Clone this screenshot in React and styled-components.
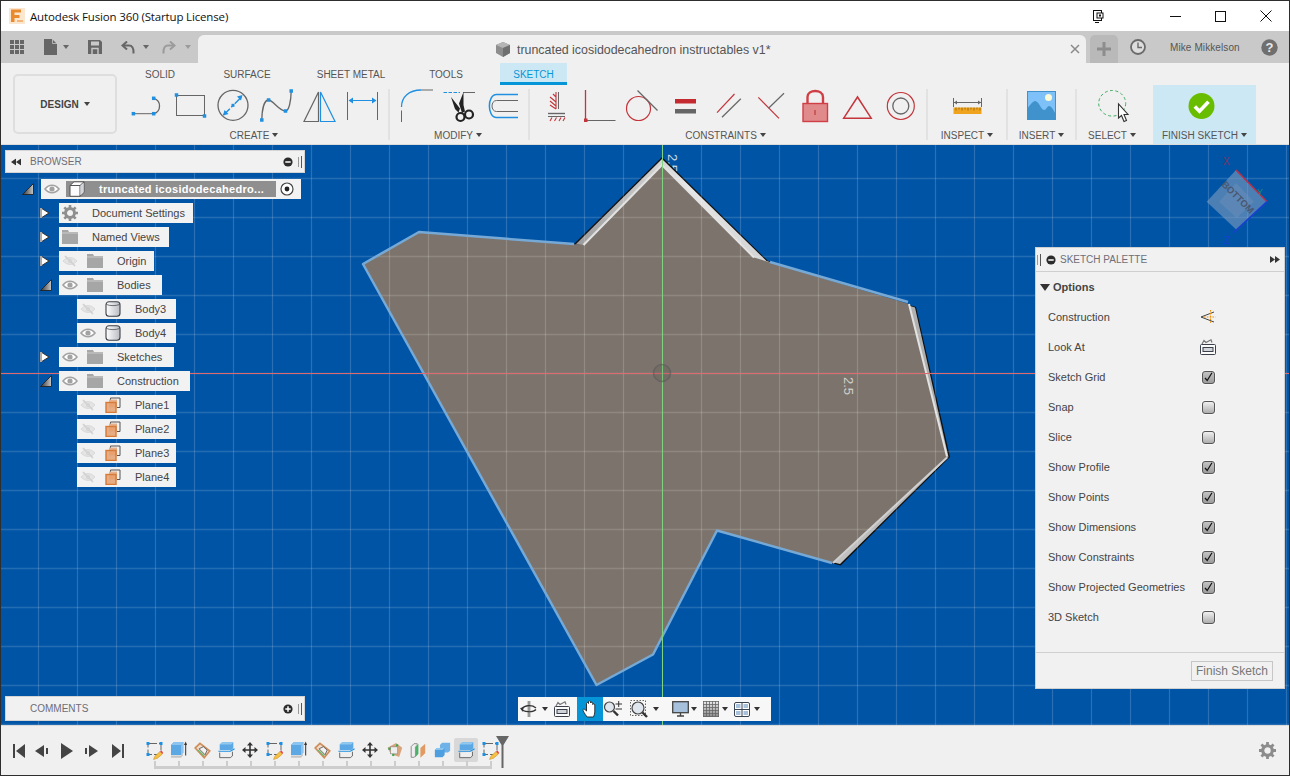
import React from "react";
import styled, { createGlobalStyle } from "styled-components";

const Global = createGlobalStyle`
  html, body { margin: 0; padding: 0; background: #f0f0f0; }
  body { font-family: "Liberation Sans", Arial, sans-serif; overflow: hidden; }
  svg { display: block; flex: none; }
`;

const Window = styled.div`
  width: 1290px; height: 776px; box-sizing: border-box;
  border: 1px solid #2e2e2e; display: flex; flex-direction: column; overflow: hidden;
`;

/* ---------- title bar ---------- */
const TitleBar = styled.header`
  height: 30px; background: #fff; display: flex; align-items: center; padding-left: 8px;
`;
const AppTitle = styled.span`
  margin-left: 5px; font: 11.5px "Open Sans", sans-serif; color: #111; letter-spacing: -0.15px;
`;
const WinControls = styled.div`
  margin-left: auto; display: flex; align-items: center; height: 100%;
`;
const WinBtn = styled.div`
  width: ${p => p.$w}px; margin-left: ${p => p.$ml || 0}px; display: flex; justify-content: center; align-items: center;
`;

/* ---------- tab strip ---------- */
const TabStrip = styled.div`
  height: 32px; background: #c9c9c9; display: flex; align-items: flex-end;
`;
const QuickBar = styled.div`
  width: 197px; height: 100%; display: flex; align-items: center;
`;
const Slot = styled.div`
  width: ${p => p.$w}px; margin-left: ${p => p.$ml || 0}px; flex: none;
  display: flex; justify-content: center; align-items: center;
`;
const DocTab = styled.div`
  width: 888px; height: 28px; background: #f0f0f0; border-radius: 6px 6px 0 0; position: relative;
  display: flex; align-items: center; padding-left: 298px; box-sizing: border-box;
`;
const DocTitle = styled.span`
  margin-left: 7px; margin-top: 2px; font-size: 12.4px; color: #555; white-space: nowrap;
`;
const DocClose = styled.div`
  position: absolute; left: 872px; top: 9px;
`;
const NewTab = styled.div`
  margin-left: 4px; width: 28px; height: 28px; background: #b9b9b9; border-radius: 5px 5px 0 0;
  display: flex; align-items: center; justify-content: center;
`;
const UserArea = styled.div`
  flex: 1; height: 100%; display: flex; align-items: center;
`;
const UserName = styled.span`
  margin-left: 24px; font-size: 10px; color: #555; width: 68px; white-space: nowrap; letter-spacing: .1px;
`;

/* ---------- ribbon ---------- */
const Ribbon = styled.div`
  height: 82px; box-sizing: border-box; background: #f0f0f0; border-bottom: 1px solid #dcdcdc;
  display: flex; padding-left: 12px;
`;
const DesignButton = styled.div`
  width: 104px; height: 60px; margin-top: 11px; box-sizing: border-box; border: 2px solid #dedede; border-radius: 5px;
  display: flex; align-items: center; justify-content: center; gap: 5px;
  font-size: 10px; font-weight: bold; color: #444;
`;
const RibbonMain = styled.div`
  margin-left: 9px; display: flex; flex-direction: column;
`;
const TabRow = styled.div`
  height: 22px; display: flex;
`;
const RibbonTab = styled.div`
  width: ${p => p.$w}px; margin-left: ${p => p.$ml || 0}px; height: 22px; box-sizing: border-box;
  display: flex; align-items: center; justify-content: center; font-size: 10px;
  padding-top: ${p => (p.$active ? "3px" : "0")};
  color: ${p => (p.$active ? "#0696d7" : "#555")};
  background: ${p => (p.$active ? "#cde8f5" : "transparent")};
  border-bottom: ${p => (p.$active ? "3px solid #0696d7" : "0")};
`;
const ToolRow = styled.div`
  height: 59px; display: flex;
`;
const ToolGroup = styled.div`
  width: ${p => p.$w}px; margin-right: ${p => p.$mr || 0}px; padding-top: 1px; box-sizing: border-box;
  display: flex; flex-direction: column; align-items: center;
`;
const Icons = styled.div`
  height: 42px; display: flex; margin-right: ${p => p.$mr || 0}px;
`;
const ToolIcon = styled.svg`
  width: 43px; height: 42px;
`;
const GroupLabel = styled.div`
  height: 14px; display: flex; align-items: center; gap: 3px; font-size: 10px; color: #555; white-space: nowrap;
  margin-right: ${p => p.$mr || 0}px;
`;
const Sep = styled.div`
  width: 2px; height: 51px; margin-top: 4px; background: #e2e2e2;
`;
const FinishGroup = styled(ToolGroup)`
  background: #cde8f5;
`;
const Caret = styled.i`
  display: block; width: 0; height: 0; flex: none;
  border-left: 3px solid transparent; border-right: 3px solid transparent;
  border-top: 4px solid ${p => p.$c || "#444"};
`;
const BigCaret = styled(Caret)`
  border-left-width: 5px; border-right-width: 5px; border-top-width: 7px;
`;

/* ---------- viewport ---------- */
const Viewport = styled.main`
  height: 580px; position: relative; background: #0054a6; overflow: hidden;
`;
const Canvas = styled.svg`
  position: absolute; left: 0; top: 0;
`;
const BrowserPanel = styled.aside`
  position: absolute; left: 4px; top: 5px; width: 300px;
`;
const PanelHead = styled.div`
  height: 23px; box-sizing: border-box; background: #f1f1f1; border: 1px solid #d4d4d4;
  display: flex; align-items: center; font-size: 10px; color: #6e6e78; padding-left: 24px; position: relative;
`;
const HeadTools = styled.div`
  position: absolute; right: 0; top: 0; height: 100%; display: flex; align-items: center;
`;
const HeadIcon = styled.div`
  position: absolute; left: ${p => p.$left}px; top: 50%; transform: translateY(-50%);
`;
const Tree = styled.div`
  margin-top: 6px; display: flex; flex-direction: column; gap: 4px;
`;
const TreeRow = styled.div`
  height: 20px; display: flex; align-items: center; padding-left: ${p => p.$indent}px;
`;
const ArrowSlot = styled.div`
  width: 19px; display: flex; align-items: center;
`;
const Pill = styled.div`
  height: 20px; width: ${p => p.$w}px; background: #f2f2f2; display: flex; align-items: center; box-sizing: border-box;
  font-size: 11px; color: #444; white-space: nowrap;
`;
const RootName = styled.div`
  width: 210px; height: 16px; margin-left: 3px; background: #8f8f8f; display: flex; align-items: center; padding-left: 3px;
  box-sizing: border-box; font-size: 11px; font-weight: bold; letter-spacing: .3px; color: #fff; white-space: nowrap;
`;
const EyeSlot = styled.div`
  width: 22px; display: flex; justify-content: center;
`;
const NodeIcon = styled.div`
  width: 16px; margin-left: ${p => p.$ml}px; display: flex; justify-content: center;
`;
const NodeText = styled.span`
  margin-left: 14px;
`;
const CommentsPanel = styled.aside`
  position: absolute; left: 4px; bottom: 4px; width: 300px; height: 25px; box-sizing: border-box;
  background: #f1f1f1; border: 1px solid #d4d4d4; padding-left: 24px;
  display: flex; align-items: center; font-size: 10px; color: #6e6e78;
`;
const NavBar = styled.nav`
  position: absolute; left: 517px; top: 552px; width: 253px; height: 24px; background: #f7f7f7;
  display: flex; align-items: center;
`;
const NavSlot = styled.div`
  width: ${p => p.$w}px; margin-left: ${p => p.$ml || 0}px; height: 24px; flex: none;
  display: flex; align-items: center; justify-content: center;
  background: ${p => (p.$active ? "#0696d7" : "transparent")};
`;
const Palette = styled.aside`
  position: absolute; left: 1034px; top: 102px; width: 250px; height: 442px; box-sizing: border-box;
  background: #f1f1f1; border: 1px solid #d0d0d0; display: flex; flex-direction: column;
`;
const PaletteHead = styled.div`
  height: 24px; flex: none; box-sizing: border-box; border-bottom: 1px solid #cfcfcf; display: flex; align-items: center;
  padding-left: 24px; font-size: 10px; color: #6e6e78; position: relative;
`;
const OptionsHead = styled.div`
  height: 30px; flex: none; display: flex; align-items: center; gap: 3px; padding-left: 4px;
  font-size: 11px; font-weight: bold; color: #444;
`;
const OptionRow = styled.div`
  height: 30px; flex: none; display: grid; grid-template-columns: 151px 18px; align-items: center; padding-left: 12px;
  font-size: 11px; color: #444;
`;
const OptionCtl = styled.div`
  display: flex; justify-content: center; align-items: center;
`;
const Check = styled.div`
  width: 11px; height: 11px; border: 1px solid #555; border-radius: 3px;
  background: ${p => (p.$on ? "linear-gradient(#c4c4c4, #9c9c9c)" : "linear-gradient(#f0f0f0, #adadad)")};
  box-shadow: 0 0 0 1px #f8f8f8; display: flex; align-items: center; justify-content: center;
`;
const PaletteFoot = styled.div`
  margin-top: auto; height: 36px; box-sizing: border-box; border-top: 1px solid #cfcfcf; display: flex; align-items: center;
  justify-content: flex-end; padding-right: 11px;
`;
const FinishBtn = styled.div`
  width: 82px; height: 20px; box-sizing: border-box; border: 1px solid #c6c6c6; background: #f1f1f1;
  display: flex; align-items: center; justify-content: center; font-size: 12px; color: #777;
`;

/* ---------- timeline ---------- */
const Timeline = styled.footer`
  height: 50px; background: #f0f0f0; display: flex; align-items: center; position: relative; box-sizing: border-box;
  border-top: 1px solid #dadada;
`;
const PlayBtn = styled.div`
  width: ${p => p.$w}px; margin-left: ${p => p.$ml || 0}px; display: flex; justify-content: center; flex: none;
`;
const Track = styled.div`
  margin-left: 18px; position: relative; display: flex; height: 47px; padding-top: 11px; box-sizing: border-box;
`;
const TrackItem = styled.div`
  width: 24px; height: 24px; display: flex; justify-content: center; align-items: center; position: relative;
  background: ${p => (p.$on ? "#d8d8d8" : "transparent")};
  border-radius: 2px;
  &::after {
    content: ""; position: absolute; left: 12px; top: 23px; width: 2px; height: 7px; background: #cdcdcd;
  }
`;
const TrackLine = styled.div`
  position: absolute; left: 12px; top: 39px; height: 3px; width: 338px; background: #cdcdcd;
`;
const Marker = styled.svg`
  position: absolute; left: 495px; top: 10px;
`;
const SettingsGear = styled.div`
  position: absolute; left: 1258px; top: 16px;
`;

/* ---------- icon drawings ---------- */
const BL = "#1e8fe1", GR = "#666", RD = "#c4343a";
const Sq = ({ x, y, s = 3.5 }) => <rect x={x - s / 2} y={y - s / 2} width={s} height={s} fill={BL} />;

const IcoLine = () => (
  <ToolIcon viewBox="0 0 43 42" fill="none">
    <path d="M7.4 27.7H27.7" stroke={GR} /><path d="M27.7 12.3A8 8 0 0 1 27.7 27.7" stroke={GR} strokeWidth="1.3" />
    <Sq x={7.4} y={27.7} /><Sq x={27.7} y={27.7} /><Sq x={27.7} y={12.3} />
  </ToolIcon>
);
const IcoRect = () => (
  <ToolIcon viewBox="0 0 43 42" fill="none">
    <rect x="7.5" y="9.5" width="28" height="20" stroke={GR} />
    <Sq x={7.5} y={9} /><Sq x={35.5} y={30} />
  </ToolIcon>
);
const IcoCircle = () => (
  <ToolIcon viewBox="0 0 43 42" fill="none">
    <circle cx="21" cy="19.3" r="15" stroke={GR} strokeWidth="1.3" />
    <path d="M11.5 29L31 9.5" stroke={BL} strokeWidth="1.4" strokeDasharray="9 2 3 2 9" />
    <path d="M30.5 9l-5.5 1.5 4 4zM11 29.5l5.5-1.5-4-4z" fill={BL} />
    <Sq x={21} y={19.3} s={3} />
  </ToolIcon>
);
const IcoSpline = () => (
  <ToolIcon viewBox="0 0 43 42" fill="none">
    <path d="M6.8 34C7 24 9 14 13.6 14C18 14 24 25 30.5 25C34 25 36 15 36.2 5" stroke={GR} strokeWidth="1.3" />
    <Sq x={6.8} y={34} /><Sq x={13.6} y={14} /><Sq x={30.5} y={25} /><Sq x={36.2} y={5} />
  </ToolIcon>
);
const IcoMirror = () => (
  <ToolIcon viewBox="0 0 43 42" fill="none">
    <path d="M6 35.5H20.5V6Z" stroke={GR} strokeWidth="1.2" /><path d="M22.5 6V35.5H37Z" stroke={BL} strokeWidth="1.2" />
  </ToolIcon>
);
const IcoDim = () => (
  <ToolIcon viewBox="0 0 43 42" fill="none">
    <path d="M6.5 6V34M36.5 6V34" stroke={GR} /><path d="M8 14.5H35" stroke={BL} />
    <path d="M7.5 14.5l4.5-3v6zM35.5 14.5l-4.5-3v6z" fill={BL} />
  </ToolIcon>
);
const IcoFillet = () => (
  <ToolIcon viewBox="0 0 43 42" fill="none">
    <path d="M6.5 24.5V36M26 4H38" stroke={GR} /><path d="M6.5 21C6.5 11 14 4 26 4" stroke={BL} strokeWidth="1.3" />
  </ToolIcon>
);
const IcoScissors = () => (
  <ToolIcon viewBox="0 0 43 42" fill="none">
    <path d="M5.5 6.5H22" stroke={BL} strokeDasharray="3.5 1.5" /><path d="M25 6.5H37" stroke={GR} />
    <path d="M13 11L22 22.5 20.5 26.5 17 23ZM25.5 6V19L27 25.5 24 27 21 17.5Z" fill="#222" />
    <circle cx="22.5" cy="31" r="4" stroke="#222" strokeWidth="2.2" /><circle cx="31" cy="28.5" r="4" stroke="#222" strokeWidth="2.2" />
  </ToolIcon>
);
const IcoOffset = () => (
  <ToolIcon viewBox="0 0 43 42" fill="none">
    <path d="M37 8.5H15.5C6 8.5 6 31.5 15.5 31.5H37" stroke={BL} strokeWidth="1.5" />
    <path d="M37 14.5H15.5C9.5 14.5 9.5 25.5 15.5 25.5H37" stroke={GR} />
  </ToolIcon>
);
const IcoFix = () => (
  <ToolIcon viewBox="0 0 43 42" fill="none">
    <path d="M23.5 6V23" stroke={GR} />
    <path d="M21 6V23M15 11l6 5M15 15l6 5M15 19l6 4M18 8l3 3" stroke={RD} strokeWidth="1.1" />
    <path d="M13 27.5H30" stroke={GR} strokeWidth="1.4" /><path d="M13 30.5H30" stroke={GR} />
    <path d="M15 35l2-3.5M19.5 35l2-3.5M24 35l2-3.5M28 35l2-3.5" stroke={RD} strokeWidth="1.1" />
  </ToolIcon>
);
const IcoCoinc = () => (
  <ToolIcon viewBox="0 0 43 42" fill="none">
    <path d="M7.5 4V34" stroke={RD} strokeWidth="1.3" /><path d="M8 34.5H37.5" stroke={GR} />
    <rect x="6" y="32.5" width="3.5" height="3.5" fill={RD} />
  </ToolIcon>
);
const IcoTangent = () => (
  <ToolIcon viewBox="0 0 43 42" fill="none">
    <circle cx="17.5" cy="22.5" r="12" stroke={RD} strokeWidth="1.2" /><path d="M16.5 4.5L36.5 24.5" stroke={GR} strokeWidth="1.2" />
  </ToolIcon>
);
const IcoEqual = () => (
  <ToolIcon viewBox="0 0 43 42">
    <rect x="11" y="13" width="21" height="4.5" fill="#c42b30" /><rect x="11" y="23" width="21" height="4.5" fill="#666" />
  </ToolIcon>
);
const IcoParallel = () => (
  <ToolIcon viewBox="0 0 43 42" fill="none">
    <path d="M27.5 8L10 26.7" stroke={RD} strokeWidth="1.2" /><path d="M33.8 12.7L15 31.3" stroke={GR} strokeWidth="1.2" />
  </ToolIcon>
);
const IcoPerp = () => (
  <ToolIcon viewBox="0 0 43 42" fill="none">
    <path d="M8.3 11.3L29 32.3" stroke={RD} strokeWidth="1.2" /><path d="M34 7.3L18.5 22.3" stroke={GR} strokeWidth="1.2" />
  </ToolIcon>
);
const IcoLock = () => (
  <ToolIcon viewBox="0 0 43 42" fill="none">
    <path d="M14.5 17.5V11C14.5 3 30 3 30 11V17.5" stroke="#cf3f45" strokeWidth="2.4" />
    <rect x="10" y="17.5" width="24.5" height="18" fill="#e08a8c" stroke="#cf3f45" strokeWidth="1.4" />
    <path d="M22 24V29" stroke="#b52a30" />
  </ToolIcon>
);
const IcoTriangle = () => (
  <ToolIcon viewBox="0 0 43 42" fill="none">
    <path d="M21.5 11L7.7 32.2H35.2Z" stroke={RD} strokeWidth="1.5" />
  </ToolIcon>
);
const IcoConcentric = () => (
  <ToolIcon viewBox="0 0 43 42" fill="none">
    <circle cx="21.8" cy="20" r="13.5" stroke={RD} strokeWidth="1.2" /><circle cx="21.8" cy="20" r="8" stroke={GR} strokeWidth="1.3" />
  </ToolIcon>
);
const IcoRuler = () => (
  <ToolIcon viewBox="0 0 43 42" fill="none">
    <rect x="7.5" y="21.5" width="28" height="6.5" fill="#f0a41e" />
    <path d="M10 21.5v3M13 21.5v2M16 21.5v3M19 21.5v2M22 21.5v3M25 21.5v2M28 21.5v3M31 21.5v2M34 21.5v3" stroke="#8c5f10" strokeWidth=".8" />
    <path d="M7.5 12V21M35.5 12V21M8 16.5H35" stroke={GR} /><path d="M8 16.5l3-2v4zM35 16.5l-3-2v4z" fill={GR} />
  </ToolIcon>
);
const IcoImage = () => (
  <ToolIcon viewBox="0 0 43 42">
    <rect x="7" y="5" width="29" height="29" fill="#7dc1f8" />
    <circle cx="28.5" cy="11.5" r="3.5" fill="#fafad8" />
    <path d="M7 34V23C10 19 13 15 15 15C19 15 21 24 24 24C26.5 24 27 20 29 20C32 20 34 26 36 28V34Z" fill="#3f92cb" />
    <rect x="7.5" y="5.5" width="28" height="28" fill="none" stroke="#3f92cb" />
  </ToolIcon>
);
const IcoSelect = () => (
  <ToolIcon viewBox="0 0 43 42" fill="none">
    <ellipse cx="21.2" cy="17.3" rx="13.5" ry="12.8" stroke="#3fae63" strokeDasharray="3 2.4" />
    <path d="M27.5 18V32L30.5 29.5 33 35.5 35.5 34.5 33 28.5H37Z" fill="#fff" stroke="#333" strokeWidth="1.1" />
  </ToolIcon>
);
const IcoFinish = () => (
  <ToolIcon viewBox="0 0 43 42" fill="none">
    <circle cx="21.5" cy="20" r="13" fill="#69bd00" />
    <path d="M14.8 20.5L19.5 25.2L28.5 15.8" stroke="#fff" strokeWidth="3.6" />
  </ToolIcon>
);

const Eye = ({ off }) => (off ? (
  <svg width="16" height="12" viewBox="0 0 16 12" fill="none">
    <path d="M1 6C5 1.5 11 1.5 15 6C11 10.5 5 10.5 1 6Z" fill="#e4e4e4" stroke="#d8d8d8" />
    <path d="M3 1L13 11" stroke="#d0d0d0" strokeWidth="1.6" /><circle cx="8" cy="6" r="2" fill="#d4d4d4" />
  </svg>
) : (
  <svg width="16" height="12" viewBox="0 0 16 12" fill="none">
    <path d="M1 6C5 1 11 1 15 6C11 11 5 11 1 6Z" fill="#fff" stroke="#a2a2a2" strokeWidth="1.6" />
    <circle cx="8" cy="6" r="2.6" fill="#a2a2a2" />
  </svg>
));
const Folder = () => (
  <svg width="16" height="14" viewBox="0 0 16 14">
    <path d="M0 0H6L7 2H16V14H0Z" fill="#a6a6a6" /><path d="M0 3H16" stroke="#d6d6d6" strokeWidth=".8" />
  </svg>
);
const Gear = ({ c = "#8f8f8f", s = 16 }) => (
  <svg width={s} height={s} viewBox="0 0 16 16" fill="none">
    <circle cx="8" cy="8" r="4.5" stroke={c} strokeWidth="3" />
    <path d="M8 0V3M8 13V16M0 8H3M13 8H16M2.3 2.3L4.5 4.5M11.5 11.5L13.7 13.7M13.7 2.3L11.5 4.5M4.5 11.5L2.3 13.7" stroke={c} strokeWidth="2.6" />
  </svg>
);
const Cylinder = ({ id }) => (
  <svg width="16" height="16" viewBox="0 0 16 16">
    <defs><linearGradient id={id} x1="0" x2="1"><stop offset="0" stopColor="#fff" /><stop offset="1" stopColor="#b9bcc2" /></linearGradient></defs>
    <rect x="1" y=".8" width="14" height="14.4" rx="3" fill={`url(#${id})`} stroke="#3d4048" strokeWidth="1.1" />
    <path d="M1.5 3.5C5 5 11 5 14.5 3.5" stroke="#3d4048" fill="none" strokeWidth=".7" />
  </svg>
);
const PlaneIcon = () => (
  <svg width="16" height="16" viewBox="0 0 16 16" fill="none">
    <path d="M5.5 3.5V1H15V10.5H12" stroke="#555" />
    <rect x="4" y="2.5" width="8" height="8" fill="#e6b08c" />
    <rect x="1" y="5.5" width="10" height="10" fill="#e6a070" fillOpacity=".85" stroke="#d87a36" strokeWidth="1.4" />
  </svg>
);
const RootCube = () => (
  <svg width="16" height="16" viewBox="0 0 16 16">
    <path d="M1 4.5L5 .8H15V11.5L11 15.3H1Z" fill="#fbfbfd" stroke="#555" />
    <path d="M1 4.5H11V15.3M11 4.5L15 .8" stroke="#555" fill="none" />
    <path d="M11.5 5L14.5 2V11L11.5 14Z" fill="#d2d6dc" />
  </svg>
);
const ArrowClosed = () => (
  <svg width="10" height="12" viewBox="0 0 10 12"><path d="M1 1L9 6L1 11Z" fill="#fff" stroke="#333" /><path d="M1 1V11" stroke="#aaa" strokeWidth="2" /></svg>
);
const ArrowOpen = () => (
  <svg width="12" height="12" viewBox="0 0 12 12">
    <defs><linearGradient id="ao" x1="0" x2="1" y1="0" y2="0"><stop offset="0" stopColor="#333" /><stop offset="1" stopColor="#c8c8c8" /></linearGradient></defs>
    <path d="M11.5 .5V11.5H.5Z" fill="url(#ao)" stroke="#222" strokeWidth=".9" />
  </svg>
);
const MinusBtn = ({ plus }) => (
  <svg width="10" height="10" viewBox="0 0 10 10">
    <circle cx="5" cy="5" r="4.6" fill="#2b2b2b" /><path d={plus ? "M2.3 5H7.7M5 2.3V7.7" : "M2.3 5H7.7"} stroke="#fff" strokeWidth="1.5" />
  </svg>
);
const Grip = () => (
  <svg width="4" height="12" viewBox="0 0 4 12"><path d="M.5 1V11" stroke="#999" /><path d="M3.5 0V12" stroke="#555" /></svg>
);
const DoubleArrow = ({ left }) => (
  <svg width="10" height="7" viewBox="0 0 10 7" fill="#333"><path d={left ? "M5 0V7L0 3.5ZM10 0V7L5 3.5Z" : "M0 0V7L5 3.5ZM5 0V7L10 3.5Z"} /></svg>
);
const LookAt = () => (
  <svg width="16" height="16" viewBox="0 0 16 16" fill="none">
    <rect x=".5" y="5.5" width="15" height="10" rx="1" fill="#fafafa" stroke="#3a3f4a" />
    <rect x="3" y="8.5" width="10" height="4" fill="#d0d3d8" stroke="#3a3f4a" />
    <path d="M2 5L4 1.5L6 3.5L11 .8L12 3.5" stroke="#777" strokeWidth="1.2" />
  </svg>
);
const ConstructionIco = () => (
  <svg width="16" height="16" viewBox="0 0 16 16" fill="none">
    <path d="M1 8L14 3M1 8L14 13" stroke="#444" />
    <path d="M4 8H15.5M10.5 1V15" stroke="#f08a00" strokeDasharray="1.6 1.2" />
  </svg>
);

/* timeline */
const TlSketch = () => (
  <svg width="18" height="20" viewBox="0 0 18 20" fill="none">
    <rect x="3" y="3.5" width="13" height="11" stroke="#666" strokeDasharray="9 2" />
    <rect x="1.5" y="2" width="3" height="3" fill={BL} /><rect x="14.5" y="2" width="3" height="3" fill={BL} /><rect x="1.5" y="13" width="3" height="3" fill={BL} />
    <path d="M8.5 19.5L10 16L15 11.5L17.5 14L12.5 18.2Z" fill="#f5c043" stroke="#c98a20" strokeWidth=".5" />
    <path d="M15 11.5L17.5 14L18 12.5L16.5 10.5Z" fill="#e8404c" />
  </svg>
);
const TlExtrude = () => (
  <svg width="18" height="20" viewBox="0 0 18 20" fill="none">
    <path d="M2 15.5H12L14 13.5V15.5L12 17.7H2Z" fill="#c5c5c5" />
    <path d="M2 5L5 2H14.3V12.5L12 15H2Z" fill="#5ca8e4" />
    <path d="M12 5L14.3 2V12.5L12 15Z" fill="#8cc4ef" /><path d="M2 5L5 2H14.3L12 5Z" fill="#8cc4ef" />
    <path d="M16.7 15.5V3.5" stroke="#333" /><path d="M16.7 1.5L15 5H18Z" fill="#333" />
  </svg>
);
const TlFace = () => (
  <svg width="17" height="17" viewBox="0 0 20 20" fill="none">
    <path d="M1.5 7L7 1.5L18.5 10.5L12 18.5Z" fill="#f0dcc8" stroke="#cf8d5c" strokeWidth="2" />
    <path d="M6 8L11 5.5L15.5 9.5L13 15Z" fill="#f2f2f2" stroke="#555" />
    <path d="M5 9.5L12 16.5" stroke="#5fbf72" strokeWidth="1.4" />
  </svg>
);
const TlSplit = () => (
  <svg width="17" height="18" viewBox="0 0 20 20" fill="none">
    <path d="M2 3.5L5 1H18V8L15.5 10H2Z" fill="#5ca8e4" /><path d="M2 3.5H15.5L18 1H5Z" fill="#90c8f0" />
    <path d="M2 13V19H14.5L17 17V12" fill="#efefef" stroke="#555" />
    <path d="M.5 11.5H14.5L19.5 8.5" stroke="#1e8fe1" strokeWidth="1.3" />
  </svg>
);
const TlMove = () => (
  <svg width="16" height="16" viewBox="0 0 16 16">
    <path d="M8 2V14M2 8H14" stroke="#333" strokeWidth="1.6" />
    <path d="M8 0L11 3.5H5ZM8 16L11 12.5H5ZM0 8L3.5 5V11ZM16 8L12.5 5V11Z" fill="#333" />
  </svg>
);
const TlCorners = () => (
  <svg width="17" height="16" viewBox="0 0 22 20">
    <path d="M2 7L13 1L21 7L17 19L6 15Z" fill="#d9a37c" />
    <rect x="6" y="6" width="9" height="9" fill="#eee" stroke="#777" strokeWidth=".6" />
    <g fill="#3aa655"><rect x="3" y="7" width="2.8" height="2.8" /><rect x="13" y="2.6" width="2.8" height="2.8" /><rect x="8" y="15" width="2.8" height="2.8" /></g>
  </svg>
);
const TlSplitBody = () => (
  <svg width="16" height="17" viewBox="0 0 20 20" fill="none">
    <path d="M1.5 5L5 1.5H9V15L5 18.5H1.5Z" fill="#efefef" stroke="#777" />
    <path d="M6 18L9.5 15V1.5L6 5Z" fill="#c9c9c9" />
    <path d="M6.5 6L10.5 1.5V14L6.5 18.5Z" fill="#4caf6a" />
    <path d="M13 7L19 1.5V13.5L13 19Z" fill="#e29a62" />
  </svg>
);
const TlCombine = () => (
  <svg width="17" height="16" viewBox="0 0 20 18">
    <path d="M7 3L9.5 .5H19V10L16.5 12H7Z" fill="#6fb2e8" />
    <path d="M1 9L3.5 6.5H12.5V15L10 17.5H1Z" fill="#4d9fe0" />
    <path d="M1 9L3.5 6.5H12.5L10 9Z" fill="#8cc4ef" />
  </svg>
);

const TL = [TlSketch, TlExtrude, TlFace, TlSplit, TlMove, TlSketch, TlExtrude, TlFace, TlSplit, TlMove, TlCorners, TlSplitBody, TlCombine, TlSplit, TlSketch];

const TREE = [
  { d: 1, w: 134, a: "c", icon: "gear", label: "Document Settings" },
  { d: 1, w: 110, a: "c", icon: "folder", label: "Named Views" },
  { d: 1, w: 95, a: "c", eye: "off", icon: "folder", label: "Origin" },
  { d: 1, w: 103, a: "o", eye: "on", icon: "folder", label: "Bodies" },
  { d: 2, w: 99, eye: "off", icon: "cyl", label: "Body3" },
  { d: 2, w: 99, eye: "on", icon: "cyl", label: "Body4" },
  { d: 1, w: 115, a: "c", eye: "on", icon: "folder", label: "Sketches" },
  { d: 1, w: 131, a: "o", eye: "on", icon: "folder", label: "Construction" },
  { d: 2, w: 99, eye: "off", icon: "plane", label: "Plane1" },
  { d: 2, w: 99, eye: "off", icon: "plane", label: "Plane2" },
  { d: 2, w: 99, eye: "off", icon: "plane", label: "Plane3" },
  { d: 2, w: 99, eye: "off", icon: "plane", label: "Plane4" },
];
const nodeIcon = n => {
  if (n.icon === "gear") return <Gear />;
  if (n.icon === "folder") return <Folder />;
  if (n.icon === "cyl") return <Cylinder id={`cy-${n.label}`} />;
  return <PlaneIcon />;
};

const OPTIONS = [
  ["Construction", <ConstructionIco key="c" />],
  ["Look At", <LookAt key="l" />],
  ["Sketch Grid", true], ["Snap", false], ["Slice", false], ["Show Profile", true], ["Show Points", true],
  ["Show Dimensions", true], ["Show Constraints", true], ["Show Projected Geometries", true], ["3D Sketch", false],
];

const gridX = Array.from({ length: 34 }, (_, i) => 662 + 39 * (i - 17));
const gridY = Array.from({ length: 16 }, (_, i) => 373 + 39 * (i - 6));

const Scene = () => (
  <Canvas width="1288" height="580" viewBox="1 145 1288 580">
    <defs>
      <linearGradient id="bev" x1="0" y1="0" x2="1" y2="0"><stop offset="0" stopColor="#9a9a9a" /><stop offset=".3" stopColor="#e6e6e6" /><stop offset="1" stopColor="#a8a8a8" /></linearGradient>
    </defs>
    <text transform="translate(668 154) rotate(90)" fontSize="13" fill="#c9d4de" fontFamily="Liberation Sans">2.5</text>
    <path d="M574 244L662 157L768 261L916 307L950 457L840.7 565.5L833 563.5Z" fill="#111" />
    <path d="M575.5 244.5L662 159L766.5 261L915 307.5L948.5 457L840 564L832 562L583 245Z" fill="url(#bev)" />
    <path d="M363 264L419 232L583.5 245L662 165L754 257.5L909 304L947.5 457L832 563.5L717 530.5L653 654.5L596.5 685Z" fill="#7c746c" />
    <path d="M583.5 245L662 165L754 257.5M909 304L947 456.5" fill="none" stroke="#e2e2e2" strokeWidth="2" />
    <path d="M947 457.5L833 563" fill="none" stroke="#d0d0d0" strokeWidth="2" />
    <g stroke="#fff" strokeOpacity=".17" strokeWidth="1.2">
      {gridX.map(x => <path key={x} d={`M${x}.5 145V725`} />)}
    </g>
    <g stroke="#fff" strokeOpacity=".14" strokeWidth="1.6">
      {gridY.map(y => <path key={y} d={`M0 ${y}.5H1290`} />)}
    </g>
    <path d="M574 244L419 232L363 264L596.5 685L653 654.5L717 530.5L832 563" fill="none" stroke="#76a9d6" strokeWidth="2.5" strokeLinejoin="round" />
    <path d="M770 262L908 302" fill="none" stroke="#76a9d6" strokeWidth="2.5" />
    <path d="M0 373.5H1290" stroke="#de6a70" />
    <path d="M662.5 145V725" stroke="#7fd27f" />
    <circle cx="662" cy="373" r="8.5" fill="#000" fillOpacity=".06" stroke="#5a5a5a" strokeOpacity=".6" strokeWidth="1.6" />
    <text transform="translate(844 377) rotate(90)" fontSize="13" fill="#d2cfca" fontFamily="Liberation Sans">2.5</text>

    <path d="M1236 170L1267 201.7L1236.7 230L1206.7 201.7Z" fill="#8aa3c0" fillOpacity=".55" />
    <path d="M1236 183L1254 201.7L1236.7 218L1219 201.7Z" fill="#7995ba" fillOpacity=".35" />
    <text transform="translate(1221 185) rotate(45)" fontSize="9.5" fill="#4a5870" fontFamily="Liberation Sans" fontWeight="bold">BOTTOM</text>
    <path d="M1236 170L1267 201.7" stroke="#b8324a" strokeWidth="1.6" />
    <path d="M1267 201.7L1233 233" stroke="#1a3fd0" strokeWidth="1.6" />
    <text x="1223" y="165" fontSize="10" fill="#7a3560" fontFamily="Liberation Sans">X</text>
    <text x="1257" y="195" fontSize="9" fill="#1f8a6a" fontFamily="Liberation Sans">Y</text>
    <text x="1224" y="244" fontSize="10" fill="#1a3fd0" fontFamily="Liberation Sans">Z</text>
  </Canvas>
);

export default function App() {
  return (
    <Window>
      <Global />
      <TitleBar>
        <svg width="16" height="16" viewBox="0 0 16 16">
          <rect width="16" height="16" fill="#fbe6d0" />
          <path d="M2 1.5H12V4.5H5.5V7H10.5V10H5.5V14H2Z" fill="#e98a2e" />
          <rect x="8" y="12" width="6" height="2" fill="#f3b578" />
        </svg>
        <AppTitle>Autodesk Fusion 360 (Startup License)</AppTitle>
        <WinControls>
          <WinBtn $w={18}>
            <svg width="12" height="15" viewBox="0 0 12 15" fill="none">
              <rect x="1.5" y="1.5" width="8" height="10" stroke="#111" /><rect x="5" y="4" width="6" height="5" fill="#fff" stroke="#111" />
              <path d="M3 13.5H7" stroke="#111" /><rect x="7" y="5.5" width="2" height="2" fill="#111" />
            </svg>
          </WinBtn>
          <WinBtn $w={46} $ml={45}>
            <svg width="11" height="1" viewBox="0 0 11 1"><path d="M0 .5H11" stroke="#111" /></svg>
          </WinBtn>
          <WinBtn $w={45}>
            <svg width="11" height="11" viewBox="0 0 11 11"><rect x=".5" y=".5" width="10" height="10" fill="none" stroke="#111" /></svg>
          </WinBtn>
          <WinBtn $w={46}>
            <svg width="12" height="12" viewBox="0 0 12 12"><path d="M.5 .5L11.5 11.5M11.5 .5L.5 11.5" stroke="#111" /></svg>
          </WinBtn>
        </WinControls>
      </TitleBar>

      <TabStrip>
        <QuickBar>
          <Slot $w={14} $ml={9}>
            <svg width="14" height="14" viewBox="0 0 14 14" fill="#666">
              {[0, 5, 10].flatMap(y => [0, 5, 10].map(x => <rect key={`${x}${y}`} x={x} y={y} width="4" height="4" />))}
            </svg>
          </Slot>
          <Slot $w={14} $ml={19}>
            <svg width="13" height="16" viewBox="0 0 13 16" fill="#666"><path d="M0 0H8L13 5V16H0Z" /><path d="M8.5 0V4.5H13" fill="none" stroke="#c9c9c9" strokeWidth=".8" /></svg>
          </Slot>
          <Slot $w={7} $ml={5}><Caret $c="#666" /></Slot>
          <Slot $w={14} $ml={19}>
            <svg width="14" height="14" viewBox="0 0 14 14"><path d="M0 0H12L14 2V14H0Z" fill="#666" /><rect x="3" y="1.5" width="8" height="4" fill="#c9c9c9" /><path d="M4 14V8.5H10V14" fill="none" stroke="#c9c9c9" strokeWidth="1.4" /></svg>
          </Slot>
          <Slot $w={16} $ml={18}>
            <svg width="14" height="13" viewBox="0 0 14 13" fill="none"><path d="M6 .5L1.5 4.5L6 8.5" stroke="#666" strokeWidth="2" /><path d="M2 4.5H8C11 4.5 13 7 12.5 12.5" stroke="#666" strokeWidth="2" /></svg>
          </Slot>
          <Slot $w={7} $ml={6}><Caret $c="#666" /></Slot>
          <Slot $w={16} $ml={12}>
            <svg width="14" height="13" viewBox="0 0 14 13" fill="none"><path d="M8 .5L12.5 4.5L8 8.5" stroke="#9b9b9b" strokeWidth="2" /><path d="M12 4.5H6C3 4.5 1 7 1.5 12.5" stroke="#9b9b9b" strokeWidth="2" /></svg>
          </Slot>
          <Slot $w={7} $ml={7}><Caret $c="#9b9b9b" /></Slot>
        </QuickBar>
        <DocTab>
          <svg width="14" height="15" viewBox="0 0 14 15">
            <path d="M0 3L7 0L14 3V11L7 15L0 11Z" fill="#8d8d8d" /><path d="M0 3L7 6L14 3L7 0Z" fill="#b5b5b5" /><path d="M7 6V15L14 11V3Z" fill="#6f6f6f" />
          </svg>
          <DocTitle>truncated icosidodecahedron instructables v1*</DocTitle>
          <DocClose>
            <svg width="10" height="10" viewBox="0 0 10 10"><path d="M1 1L9 9M9 1L1 9" stroke="#8a8a8a" strokeWidth="1.5" /></svg>
          </DocClose>
        </DocTab>
        <NewTab>
          <svg width="14" height="14" viewBox="0 0 14 14"><path d="M7 0V14M0 7H14" stroke="#8d8d8d" strokeWidth="3" /></svg>
        </NewTab>
        <UserArea>
          <Slot $w={16} $ml={12}>
            <svg width="16" height="16" viewBox="0 0 16 16" fill="none"><circle cx="8" cy="8" r="7" fill="#ddd" stroke="#6a6a6a" strokeWidth="1.8" /><path d="M8 3.5V8.5H12" stroke="#6a6a6a" strokeWidth="1.4" /></svg>
          </Slot>
          <UserName>Mike Mikkelson</UserName>
          <Slot $w={17} $ml={23}>
            <svg width="17" height="17" viewBox="0 0 17 17">
              <circle cx="8.5" cy="8.5" r="8.2" fill="#6f6f6f" />
              <text x="8.5" y="13" fontSize="13" fontWeight="bold" fill="#e8e8e8" textAnchor="middle" fontFamily="Liberation Sans">?</text>
            </svg>
          </Slot>
        </UserArea>
      </TabStrip>

      <Ribbon>
        <DesignButton>DESIGN <Caret /></DesignButton>
        <RibbonMain>
          <TabRow>
            <RibbonTab $w={68}>SOLID</RibbonTab>
            <RibbonTab $w={106}>SURFACE</RibbonTab>
            <RibbonTab $w={102}>SHEET METAL</RibbonTab>
            <RibbonTab $w={88}>TOOLS</RibbonTab>
            <RibbonTab $w={67} $ml={10} $active>SKETCH</RibbonTab>
          </TabRow>
          <ToolRow>
            <ToolGroup $w={262}>
              <Icons $mr={4}><IcoLine /><IcoRect /><IcoCircle /><IcoSpline /><IcoMirror /><IcoDim /></Icons>
              <GroupLabel $mr={6}>CREATE <Caret /></GroupLabel>
            </ToolGroup>
            <Sep />
            <ToolGroup $w={138}>
              <Icons><IcoFillet /><IcoScissors /><IcoOffset /></Icons>
              <GroupLabel $mr={2}>MODIFY <Caret /></GroupLabel>
            </ToolGroup>
            <Sep />
            <ToolGroup $w={396}>
              <Icons><IcoFix /><IcoCoinc /><IcoTangent /><IcoEqual /><IcoParallel /><IcoPerp /><IcoLock /><IcoTriangle /><IcoConcentric /></Icons>
              <GroupLabel $mr={5}>CONSTRAINTS <Caret /></GroupLabel>
            </ToolGroup>
            <Sep />
            <ToolGroup $w={78}><Icons><IcoRuler /></Icons><GroupLabel>INSPECT <Caret /></GroupLabel></ToolGroup>
            <Sep />
            <ToolGroup $w={67}><Icons $mr={1}><IcoImage /></Icons><GroupLabel>INSERT <Caret /></GroupLabel></ToolGroup>
            <Sep />
            <ToolGroup $w={70} $mr={6}><Icons><IcoSelect /></Icons><GroupLabel>SELECT <Caret /></GroupLabel></ToolGroup>
            <FinishGroup $w={103}>
              <Icons $mr={7}><IcoFinish /></Icons>
              <GroupLabel>FINISH SKETCH <Caret /></GroupLabel>
            </FinishGroup>
          </ToolRow>
        </RibbonMain>
      </Ribbon>

      <Viewport>
        <Scene />
        <BrowserPanel>
          <PanelHead>
            <HeadIcon $left={5}><DoubleArrow left /></HeadIcon>
            BROWSER
            <HeadTools><MinusBtn /><Slot $w={5} /><Grip /><Slot $w={2} /></HeadTools>
          </PanelHead>
          <Tree>
            <TreeRow $indent={17}>
              <ArrowSlot><ArrowOpen /></ArrowSlot>
              <Pill $w={260}>
                <EyeSlot><Eye /></EyeSlot>
                <RootName><RootCube /><NodeText>truncated icosidodecahedro...</NodeText></RootName>
                <Slot $w={22}>
                  <svg width="14" height="14" viewBox="0 0 14 14"><circle cx="7" cy="7" r="6" fill="#fff" stroke="#444" strokeWidth="1.2" /><circle cx="7" cy="7" r="2.4" fill="#222" /></svg>
                </Slot>
              </Pill>
            </TreeRow>
            {TREE.map(n => (
              <TreeRow key={n.label} $indent={n.d === 1 ? 35 : 53}>
                <ArrowSlot>{n.a === "c" && <ArrowClosed />}{n.a === "o" && <ArrowOpen />}</ArrowSlot>
                <Pill $w={n.w}>
                  {n.eye ? <EyeSlot><Eye off={n.eye === "off"} /></EyeSlot> : null}
                  <NodeIcon $ml={n.eye ? 6 : 3}>{nodeIcon(n)}</NodeIcon>
                  <NodeText>{n.label}</NodeText>
                </Pill>
              </TreeRow>
            ))}
          </Tree>
        </BrowserPanel>

        <CommentsPanel>
          COMMENTS
          <HeadTools><MinusBtn plus /><Slot $w={5} /><Grip /><Slot $w={2} /></HeadTools>
        </CommentsPanel>

        <NavBar>
          <Slot $w={18} $ml={2}>
            <svg width="18" height="18" viewBox="0 0 18 18" fill="none">
              <path d="M9 1V17" stroke="#333" strokeWidth="2.4" /><path d="M9 1V17" stroke="#fff" strokeWidth="1" />
              <path d="M16 8C12 4.5 5 5 1.5 9C3 12 13 13 16 9.5" stroke="#333" strokeWidth="1.2" /><path d="M0 8L3.5 7.5 3 12Z" fill="#333" />
            </svg>
          </Slot>
          <Slot $w={7} $ml={3}><Caret $c="#333" /></Slot>
          <Slot $w={16} $ml={6}><LookAt /></Slot>
          <NavSlot $w={26} $ml={7} $active>
            <svg width="17" height="18" viewBox="0 0 17 18" fill="#fff" stroke="#222" strokeWidth=".9">
              <path d="M5 17C3 14 .5 10.5 1 9.5C1.8 8.5 3 9.5 4.5 11V3.5C4.5 2.2 6.3 2.2 6.5 3.5V1.8C6.5 .5 8.5 .5 8.6 1.8V3C8.8 1.8 10.6 2 10.7 3.2V4.5C11 3.4 12.8 3.6 12.8 5V12C12.8 14 12 15.5 11.5 17Z" />
            </svg>
          </NavSlot>
          <Slot $w={20}>
            <svg width="20" height="18" viewBox="0 0 20 18" fill="none">
              <circle cx="6.5" cy="7" r="5" fill="#dfe6ee" stroke="#444" strokeWidth="1.2" /><path d="M10.5 11L15 15.5" stroke="#333" strokeWidth="2.4" />
              <path d="M12.5 4H19M15.7 1V7M12.5 9H19" stroke="#333" />
            </svg>
          </Slot>
          <Slot $w={20} $ml={7}>
            <svg width="20" height="18" viewBox="0 0 20 18" fill="none">
              <rect x=".5" y=".5" width="15" height="15" stroke="#666" strokeDasharray="1.5 1.5" />
              <circle cx="8" cy="8" r="6" fill="#dfe6ee" stroke="#444" strokeWidth="1.2" /><path d="M12.5 12.5L17 17" stroke="#333" strokeWidth="2.4" />
            </svg>
          </Slot>
          <Slot $w={7} $ml={2}><Caret $c="#333" /></Slot>
          <Slot $w={17} $ml={13}>
            <svg width="17" height="16" viewBox="0 0 17 16" fill="none">
              <rect x=".7" y=".7" width="15.6" height="11" fill="#a7c0dc" stroke="#444" strokeWidth="1.3" />
              <path d="M5 15H12M8.5 12V15" stroke="#444" strokeWidth="1.4" />
            </svg>
          </Slot>
          <Slot $w={7} $ml={1}><Caret $c="#333" /></Slot>
          <Slot $w={16} $ml={6}>
            <svg width="16" height="16" viewBox="0 0 16 16">
              <defs><linearGradient id="gg" x1="0" x2="0" y1="0" y2="1"><stop offset="0" stopColor="#eee" /><stop offset="1" stopColor="#888" /></linearGradient></defs>
              <rect width="16" height="16" fill="url(#gg)" />
              <path d="M.5 0V16M3.5 0V16M6.5 0V16M9.5 0V16M12.5 0V16M15.5 0V16M0 .5H16M0 3.5H16M0 6.5H16M0 9.5H16M0 12.5H16M0 15.5H16" stroke="#666" strokeWidth=".8" />
            </svg>
          </Slot>
          <Slot $w={7} $ml={2}><Caret $c="#333" /></Slot>
          <Slot $w={16} $ml={6}>
            <svg width="16" height="15" viewBox="0 0 16 15">
              <rect x=".5" y=".5" width="15" height="14" rx="1.5" fill="#fff" stroke="#3a4454" />
              <path d="M8 .5V14.5M.5 7.5H15.5" stroke="#3a4454" />
              <g fill="#a7c0dc"><rect x="2" y="2" width="4.5" height="4" /><rect x="9.5" y="2" width="4.5" height="4" /><rect x="2" y="9" width="4.5" height="4" /><rect x="9.5" y="9" width="4.5" height="4" /></g>
            </svg>
          </Slot>
          <Slot $w={7} $ml={3}><Caret $c="#333" /></Slot>
        </NavBar>

        <Palette>
          <PaletteHead>
            <HeadIcon $left={1}><Grip /></HeadIcon>
            <HeadIcon $left={10}><MinusBtn /></HeadIcon>
            SKETCH PALETTE
            <HeadTools><DoubleArrow /><Slot $w={4} /></HeadTools>
          </PaletteHead>
          <OptionsHead><BigCaret $c="#333" />Options</OptionsHead>
          {OPTIONS.map(([label, ctl]) => (
            <OptionRow key={label}>
              {label}
              <OptionCtl>
                {typeof ctl === "boolean" ? (
                  <Check $on={ctl}>
                    {ctl && <svg width="9" height="10" viewBox="0 0 9 10" fill="none"><path d="M1 6L3.2 8.5L8 .8" stroke="#111" strokeWidth="1.2" /></svg>}
                  </Check>
                ) : ctl}
              </OptionCtl>
            </OptionRow>
          ))}
          <PaletteFoot><FinishBtn>Finish Sketch</FinishBtn></PaletteFoot>
        </Palette>
      </Viewport>

      <Timeline>
        <PlayBtn $w={13} $ml={11}><svg width="12" height="14" viewBox="0 0 12 14" fill="#444"><rect width="2" height="14" /><path d="M12 0V14L3 7Z" /></svg></PlayBtn>
        <PlayBtn $w={14} $ml={10}><svg width="14" height="12" viewBox="0 0 14 12" fill="#444"><path d="M9 0V12L0 6Z" /><rect x="11" y="3" width="2" height="6" /></svg></PlayBtn>
        <PlayBtn $w={12} $ml={12}><svg width="12" height="16" viewBox="0 0 12 16" fill="#444"><path d="M0 0V16L12 8Z" /></svg></PlayBtn>
        <PlayBtn $w={14} $ml={11}><svg width="14" height="12" viewBox="0 0 14 12" fill="#444"><rect x="1" y="3" width="2" height="6" /><path d="M5 0V12L14 6Z" /></svg></PlayBtn>
        <PlayBtn $w={13} $ml={13}><svg width="12" height="14" viewBox="0 0 12 14" fill="#444"><path d="M0 0V14L9 7Z" /><rect x="10" width="2" height="14" /></svg></PlayBtn>
        <Track>
          <TrackLine />
          {TL.map((Ic, i) => <TrackItem key={i} $on={i === 13}><Ic /></TrackItem>)}
        </Track>
        <Marker width="14" height="32" viewBox="0 0 14 32" fill="#666">
          <path d="M0 0H13L7.5 9V32H5.5V9Z" />
        </Marker>
        <SettingsGear><Gear c="#8c8c8c" s={17} /></SettingsGear>
      </Timeline>
    </Window>
  );
}
